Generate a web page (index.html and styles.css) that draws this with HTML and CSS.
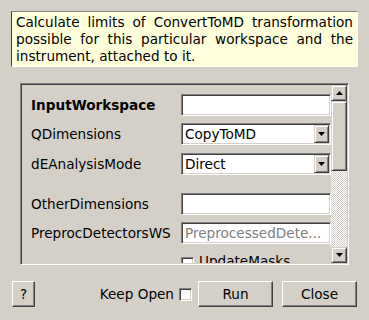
FILE: index.html
```html
<!DOCTYPE html>
<html lang="en">
<head>
    <meta charset="UTF-8">
    <title>ConvertToMDMinMaxLocal</title>
    <link rel="stylesheet" href="styles.css">
</head>
<body>
    <div class="dialog">
        <div class="desc">Calculate limits of ConvertToMD transformation possible for this particular workspace and the instrument, attached to it.</div>

        <div class="frame">
            <div class="props">
                <div class="row">
                    <label class="name bold">InputWorkspace</label>
                    <div class="field"></div>
                </div>
                <div class="row">
                    <label class="name">QDimensions</label>
                    <div class="field combo">
                        <span class="value">CopyToMD</span>
                        <span class="drop"><svg width="7" height="4"><polygon points="0,0 7,0 3.5,4" fill="#000"/></svg></span>
                    </div>
                </div>
                <div class="row third">
                    <label class="name">dEAnalysisMode</label>
                    <div class="field combo">
                        <span class="value">Direct</span>
                        <span class="drop"><svg width="7" height="4"><polygon points="0,0 7,0 3.5,4" fill="#000"/></svg></span>
                    </div>
                </div>
                <div class="row spaced">
                    <label class="name">OtherDimensions</label>
                    <div class="field"></div>
                </div>
                <div class="row">
                    <label class="name">PreprocDetectorsWS</label>
                    <div class="field"><span class="hint">PreprocessedDete...</span></div>
                </div>
                <div class="row checkrow">
                    <span class="name"></span>
                    <span class="check"></span>
                    <span class="checklabel">UpdateMasks</span>
                </div>
            </div>
            <div class="scrollbar">
                <div class="sbtn"><svg width="7" height="4"><polygon points="3.5,0 7,4 0,4" fill="#000"/></svg></div>
                <div class="handle"></div>
                <div class="track"></div>
                <div class="sbtn"><svg width="7" height="4"><polygon points="0,0 7,0 3.5,4" fill="#000"/></svg></div>
            </div>
        </div>

        <div class="buttons">
            <button class="btn help">?</button>
            <span class="keep">Keep Open</span>
            <span class="check keepbox"></span>
            <button class="btn run">Run</button>
            <button class="btn close">Close</button>
        </div>
    </div>
</body>
</html>
```

FILE: styles.css
```css
body {
    margin: 0;
    padding: 0;
    background-color: #d4d0c8;
    font-family: 'DejaVu Sans', sans-serif;
    font-size: 13.6px;
    color: #000;
}

.dialog {
    width: 369px;
    height: 320px;
    overflow: hidden;
}

.desc {
    margin: 11px 11px 0 11px;
    height: 56px;
    box-sizing: border-box;
    padding: 2px 4px 1px 4px;
    line-height: 17px;
    text-align: justify;
    background-color: #ffffdc;
    border: 1px solid;
    border-color: #808080 #ffffff #ffffff #404040;
}

.frame {
    margin: 16px 20px 0 20px;
    height: 182px;
    box-sizing: border-box;
    display: flex;
    border: 1px solid;
    border-color: #808080 #ffffff #ffffff #808080;
    box-shadow: inset 1px 1px #404040, inset -1px -1px #d4d0c8;
    padding: 1px;
}

.props {
    flex: 1;
    overflow: hidden;
    padding: 9px 0 0 9px;
}

.row {
    display: flex;
    align-items: center;
    height: 22px;
    margin-bottom: 7px;
}

.row.third {
    margin-top: 8px;
}

.row.spaced {
    margin-top: 18px;
}

.name {
    width: 150px;
    flex: none;
    line-height: 22px;
    white-space: nowrap;
}

.bold {
    font-weight: bold;
}

.field {
    flex: 1;
    height: 22px;
    box-sizing: border-box;
    background-color: #fff;
    border: 1px solid;
    border-color: #808080 #ffffff #ffffff #808080;
    box-shadow: inset 1px 1px #404040, inset -1px -1px #d4d0c8;
    display: flex;
    align-items: center;
    padding: 0 0 0 3px;
}

.hint {
    color: #808080;
    white-space: nowrap;
}

.combo {
    padding: 1px 1px 1px 3px;
}

.combo .value {
    flex: 1;
}

.drop {
    width: 15px;
    height: 18px;
    box-sizing: border-box;
    background-color: #d4d0c8;
    border: 1px solid;
    border-color: #d4d0c8 #404040 #404040 #d4d0c8;
    box-shadow: inset 1px 1px #fff, inset -1px -1px #808080;
    display: flex;
    align-items: center;
    justify-content: center;
}

.checkrow {
    align-items: flex-start;
    padding-top: 6px;
}

.check {
    display: inline-block;
    width: 13px;
    height: 13px;
    box-sizing: border-box;
    background-color: #fff;
    border: 1px solid;
    border-color: #808080 #ffffff #ffffff #808080;
    box-shadow: inset 1px 1px #404040, inset -1px -1px #d4d0c8;
    flex: none;
}

.checklabel {
    margin-left: 5px;
    line-height: 13px;
    margin-top: -2px;
    white-space: nowrap;
}

.scrollbar {
    width: 16px;
    flex: none;
    display: flex;
    flex-direction: column;
}

.sbtn,
.handle {
    box-sizing: border-box;
    background-color: #d4d0c8;
    border: 1px solid;
    border-color: #d4d0c8 #404040 #404040 #d4d0c8;
    box-shadow: inset 1px 1px #fff, inset -1px -1px #808080;
}

.sbtn {
    height: 16px;
    display: flex;
    align-items: center;
    justify-content: center;
}

.handle {
    height: 70px;
}

.track {
    flex: 1;
    background: repeating-conic-gradient(#ffffff 0 25%, #d4d0c8 0 50%) 0 0 / 2px 2px;
}

.buttons {
    margin-top: 16px;
    padding: 0 12px;
    display: flex;
    align-items: center;
}

.btn {
    height: 26px;
    box-sizing: border-box;
    font-family: 'DejaVu Sans', sans-serif;
    font-size: 13.6px;
    color: #000;
    background-color: #d4d0c8;
    border: 1px solid;
    border-color: #ffffff #404040 #404040 #ffffff;
    box-shadow: inset -1px -1px #808080, inset 1px 1px #d4d0c8;
    padding: 0;
}

.help {
    width: 23px;
}

.keep {
    margin-left: auto;
}

.keepbox {
    margin-left: 5px;
}

.run {
    width: 75px;
    margin-left: 6px;
}

.close {
    width: 75px;
    margin-left: 9px;
}
```
